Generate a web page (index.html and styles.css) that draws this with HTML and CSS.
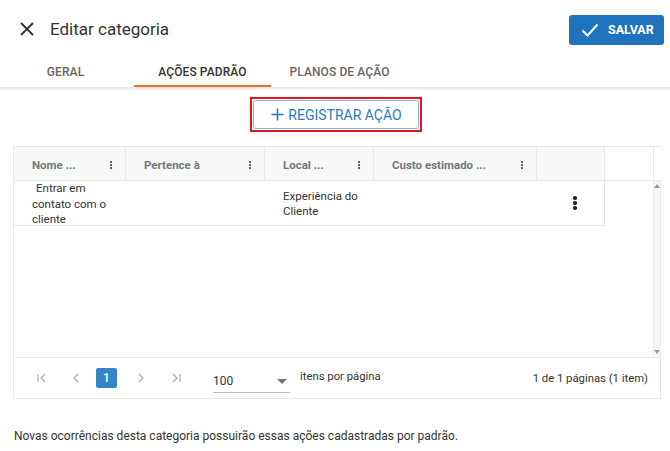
FILE: index.html
```html
<!DOCTYPE html>
<html lang="pt-BR">
<head>
<meta charset="utf-8">
<title>Editar categoria</title>
<link rel="stylesheet" href="styles.css">
</head>
<body>
<header class="topbar">
  <svg class="close" width="14" height="14" viewBox="0 0 14 14"><path d="M1 1L13 13M13 1L1 13" stroke="#333" stroke-width="1.8" fill="none"/></svg>
  <h1 class="title">Editar categoria</h1>
  <button class="save">
    <svg width="18" height="14" viewBox="0 0 18 14"><path d="M1.5 7.5L6.5 12.5L16.5 1.5" stroke="#fff" stroke-width="2" fill="none"/></svg>
    <span>SALVAR</span>
  </button>
</header>
<nav class="tabs">
  <div class="tab">GERAL</div>
  <div class="tab active">AÇÕES PADRÃO</div>
  <div class="tab">PLANOS DE AÇÃO</div>
</nav>
<main class="content">
  <div class="register-wrap">
    <div class="highlight">
      <button class="register">
        <svg width="13" height="13" viewBox="0 0 13 13"><path d="M6.5 0.5V12.5M0.5 6.5H12.5" stroke="#2b7cc1" stroke-width="1.6" fill="none"/></svg>
        <span>REGISTRAR AÇÃO</span>
      </button>
    </div>
  </div>

  <section class="grid">
    <div class="grid-head">
      <div class="hcell"><span>Nome ...</span><i class="kebab-s"></i></div>
      <div class="hcell"><span>Pertence à</span><i class="kebab-s"></i></div>
      <div class="hcell"><span>Local ...</span><i class="kebab-s"></i></div>
      <div class="hcell"><span>Custo estimado ...</span><i class="kebab-s"></i></div>
      <div class="hcell"></div>
      <div class="hcell blank"></div>
      <div class="hcell end"></div>
    </div>
    <div class="grid-body">
      <div class="rows">
        <div class="row">
          <div class="cell name">Entrar em contato com o cliente</div>
          <div class="cell"></div>
          <div class="cell">Experiência do Cliente</div>
          <div class="cell"></div>
          <div class="cell act"><i class="kebab-l"></i></div>
        </div>
      </div>
      <div class="scrollbar">
        <span class="arr up"></span>
        <span class="arr down"></span>
      </div>
    </div>
    <div class="pager">
      <svg class="pg first" width="10" height="10" viewBox="0 0 10 10"><path d="M1 1V9M8 1L4 5L8 9" stroke="#aaa" stroke-width="1.2" fill="none"/></svg>
      <svg class="pg prev" width="6" height="10" viewBox="0 0 6 10"><path d="M5 1L1 5L5 9" stroke="#aaa" stroke-width="1.2" fill="none"/></svg>
      <span class="page">1</span>
      <svg class="pg next" width="6" height="10" viewBox="0 0 6 10"><path d="M1 1L5 5L1 9" stroke="#aaa" stroke-width="1.2" fill="none"/></svg>
      <svg class="pg last" width="10" height="10" viewBox="0 0 10 10"><path d="M2 1L6 5L2 9M9 1V9" stroke="#aaa" stroke-width="1.2" fill="none"/></svg>
      <div class="select"><span>100</span><i class="caret"></i></div>
      <span class="perpage">itens por página</span>
      <span class="info">1 de 1 páginas (1 item)</span>
    </div>
  </section>

  <p class="note">Novas ocorrências desta categoria possuirão essas ações cadastradas por padrão.</p>
</main>
</body>
</html>
```

FILE: styles.css
```css
* { box-sizing: border-box; }
html, body { margin: 0; padding: 0; background: #fff; }
body { font-family: Roboto, "Noto Sans", Arial, sans-serif; color: #333; width: 670px; }

.topbar {
  height: 57px;
  display: flex;
  align-items: center;
  padding: 1px 6px 0 20px;
}
.close { display: block; }
.title {
  margin: 0 0 0 16px;
  font-size: 17px;
  font-weight: 400;
  color: #333;
  flex: 1;
}
.save {
  width: 95px;
  height: 30px;
  border: none;
  border-radius: 3px;
  background: #1f73bd;
  color: #fff;
  display: flex;
  align-items: center;
  padding: 0 0 0 12px;
  gap: 9px;
  font-family: inherit;
  font-size: 12.5px;
  font-weight: 700;
  margin-top: 1px;
}

.tabs {
  display: flex;
  height: 30px;
  margin-left: -3px;
  position: relative;
}
.content { position: relative; }
.tabs::after {
  content: "";
  position: absolute;
  left: 3px; right: 0; bottom: -4px;
  height: 4px;
  background: linear-gradient(#e4e4e4, rgba(255,255,255,0));
}
.tab {
  width: 137px;
  display: flex;
  align-items: center;
  justify-content: center;
  font-size: 12px;
  font-weight: 500;
  color: #666;
  letter-spacing: 0.1px;
  border-bottom: 2px solid transparent;
  padding-top: 1px;
}
.tab.active { color: #333; border-bottom-color: #f26a2e; }

.register-wrap {
  display: flex;
  justify-content: center;
  padding-top: 10px;
}
.highlight {
  border: 2px solid #e4141b;
  padding: 1px;
  margin-left: 1px;
}
.register {
  width: 166px;
  height: 29px;
  border: 1px solid #8fb5dd;
  border-radius: 3px;
  background: #fff;
  color: #2b7cc1;
  font-family: inherit;
  font-size: 14px;
  display: flex;
  align-items: center;
  justify-content: center;
  gap: 4px;
  padding: 0 0 0 2px;
}
.register svg { display: block; }

.grid {
  margin: 14px 9px 0 13px;
  border: 1px solid #e8e8e8;
}
.grid-head {
  display: grid;
  grid-template-columns: 112px 139px 109px 163px 68px 1fr 6px;
  height: 34px;
  border-bottom: 1px solid #e8e8e8;
}
.hcell {
  background: #f7f8f8;
  border-right: 1px solid #e8e8e8;
  display: flex;
  align-items: center;
  justify-content: space-between;
  padding: 2px 13px 0 18px;
  font-size: 11.5px;
  font-weight: 700;
  color: #777;
}
.hcell.blank { background: #fff; }
.hcell.end { background: #fff; border-right: none; }

.kebab-s {
  width: 2px;
  height: 2px;
  background: #333;
  border-radius: 50%;
  box-shadow: 0 -3px 0 #333, 0 3px 0 #333;
  display: block;
}
.kebab-l {
  width: 3.5px;
  height: 3.5px;
  background: #222;
  border-radius: 50%;
  box-shadow: 0 -5px 0 #222, 0 5px 0 #222;
  display: block;
}

.grid-body {
  display: flex;
  height: 176px;
}
.rows { flex: 1; }
.row {
  display: grid;
  grid-template-columns: 112px 139px 109px 163px 67px;
  width: 591px;
  height: 45px;
  border-bottom: 1px solid #e8e8e8;
  border-right: 1px solid #e8e8e8;
}
.cell {
  font-size: 11.5px;
  line-height: 15.5px;
  color: #333;
  padding: 0 6px 0 18px;
  display: flex;
  align-items: center;
}
.cell.name { text-indent: 4px; display: block; padding-top: 0; }
.cell.act { justify-content: center; padding: 0 0 0 9px; margin-top: -3px; }

.scrollbar {
  width: 7px;
  background: #f6f6f6;
  border-left: 1px solid #ececec;
  display: flex;
  flex-direction: column;
  justify-content: space-between;
  align-items: center;
  padding: 3px 0 3px;
}
.arr { width: 0; height: 0; border-left: 3px solid transparent; border-right: 3px solid transparent; }
.arr.up { border-bottom: 4px solid #999; }
.arr.down { border-top: 4px solid #999; }

.pager {
  height: 41px;
  border-top: 1px solid #e8e8e8;
  display: flex;
  align-items: center;
  padding: 0 12px 0 23px;
  font-size: 11.3px;
  color: #333;
}
.pg { display: block; }
.pg.first { margin-right: 26px; }
.pg.prev { margin-right: 17px; }
.page {
  width: 21px;
  height: 20px;
  background: #3684c8;
  color: #fff;
  border-radius: 2px;
  display: flex;
  align-items: center;
  justify-content: center;
  font-size: 12px;
  font-weight: 500;
  margin-right: 21px;
}
.pg.next { margin-right: 27px; }
.pg.last { margin-right: 32px; }
.select {
  width: 77px;
  height: 26px;
  border-bottom: 1px solid #bbb;
  display: flex;
  align-items: center;
  justify-content: space-between;
  padding: 3px 3px 0 0;
  margin-top: 4px;
  margin-right: 10px;
  font-size: 12px;
}
.caret {
  width: 0; height: 0;
  border-left: 5px solid transparent;
  border-right: 5px solid transparent;
  border-top: 5px solid #777;
  display: block;
}
.perpage { margin-top: -3px; }
.info { margin-left: auto; }

.note {
  margin: 30px 0 0 14px;
  font-size: 12px;
  color: #333;
}
```
